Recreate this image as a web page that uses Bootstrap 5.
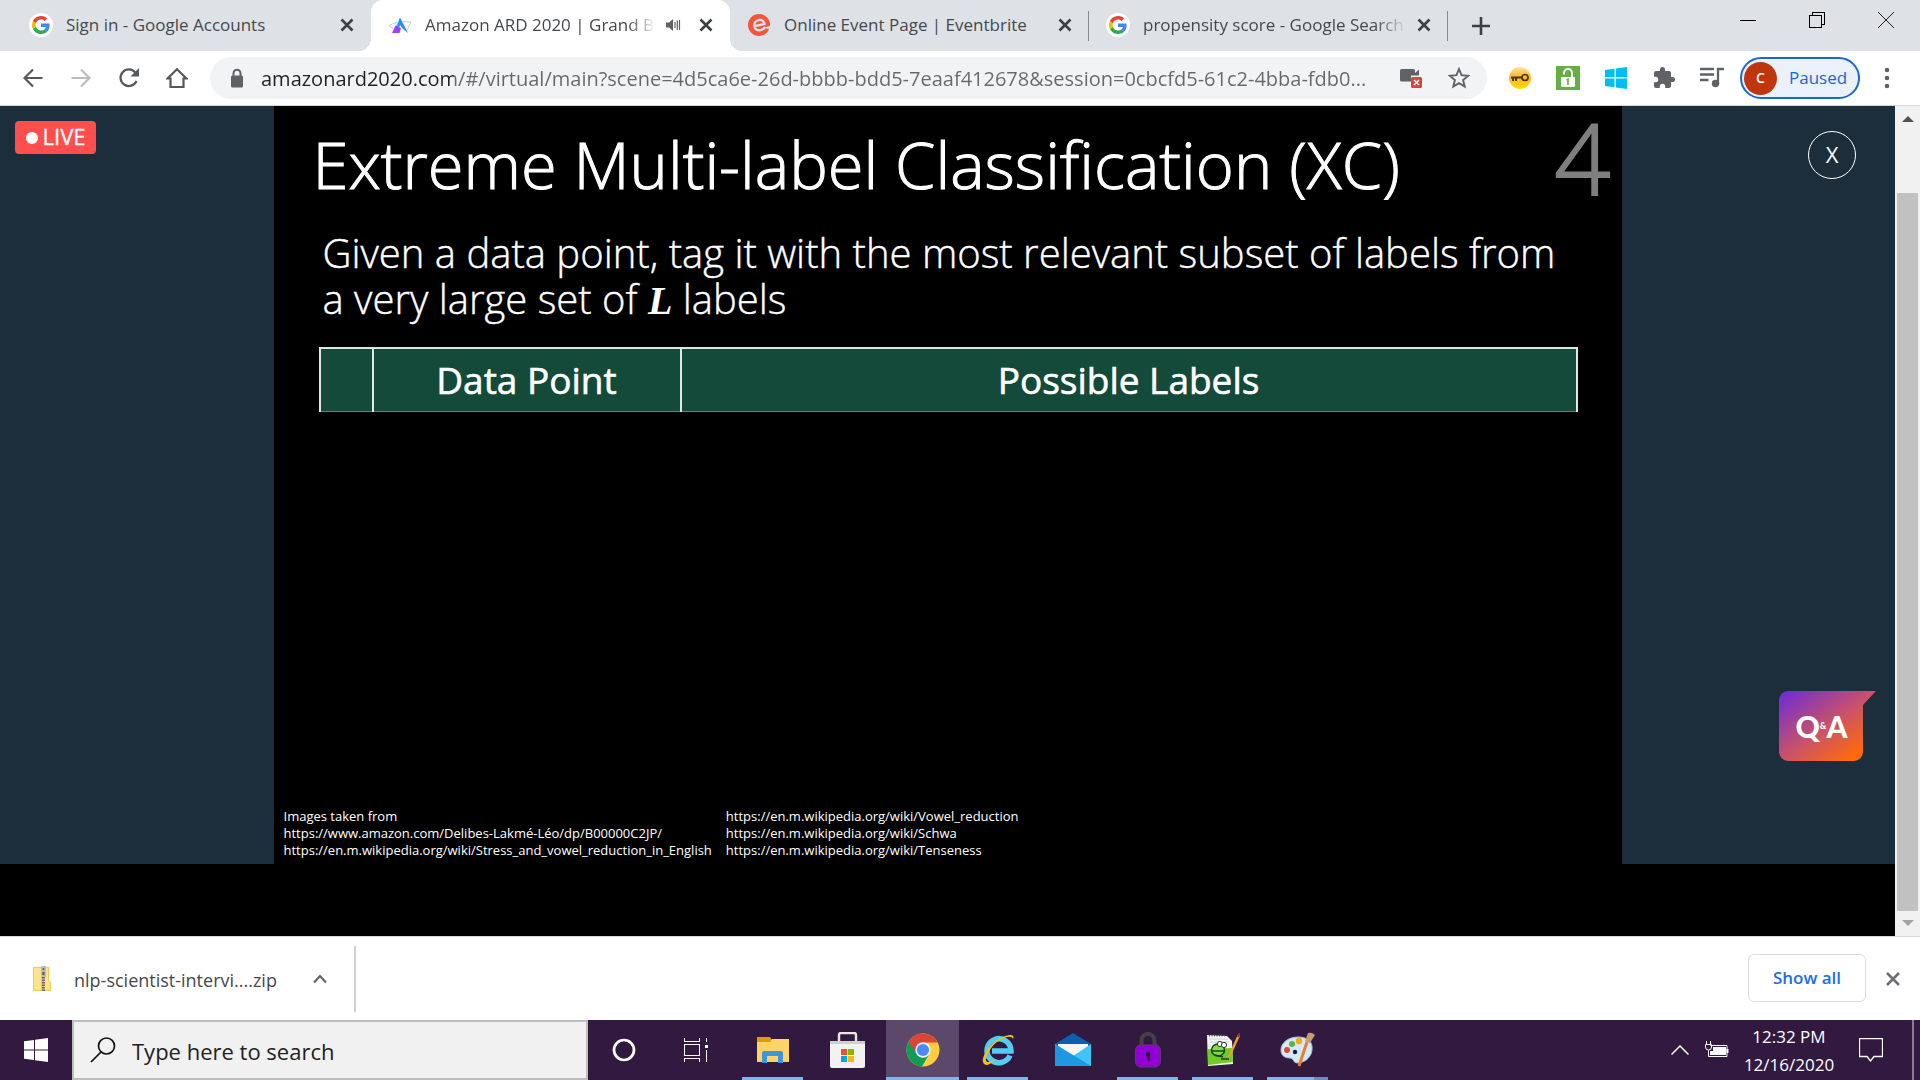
<!DOCTYPE html>
<html lang="en">
<head>
<meta charset="utf-8">
<meta name="viewport" content="width=device-width, initial-scale=1">
<title>Amazon ARD 2020 | Grand Ballroom</title>
<link href="https://cdn.jsdelivr.net/npm/bootstrap@5.3.0/dist/css/bootstrap.min.css" rel="stylesheet">
<style>
  body { font-family: "Open Sans", "Noto Sans", sans-serif; background: #000; overflow: hidden; }
  button { background: none; border: 0; padding: 0; color: inherit; }
  svg { display: block; flex: none; }

  /* tab strip */
  .tabstrip { height: 51px; background: #dee1e6; padding-left: 12px; color: #45494d; }
  .tab-item { flex: 0 1 359px; height: 51px; padding: 0 12px 2px 17px; gap: 13px; position: relative; min-width: 0; }
  .tab-item a { font-size: 17px; line-height: 24px; color: #45494d; text-decoration: none; white-space: nowrap; overflow: hidden; flex: 1 1 0; margin-right: -8px; }
  .tab-item a.fading { -webkit-mask-image: linear-gradient(to right, #000 88%, transparent); mask-image: linear-gradient(to right, #000 88%, transparent); }
  .tab-item.current { background: #fff; border-radius: 12px 12px 0 0; }
  .tab-item.current a { margin-right: -4px; }
  .tab-item.current::before, .tab-item.current::after { content: ""; position: absolute; bottom: 0; width: 12px; height: 12px; }
  .tab-item.current::before { left: -12px; background: radial-gradient(circle at 0 0, transparent 12px, #fff 12px); }
  .tab-item.current::after { right: -12px; background: radial-gradient(circle at 100% 0, transparent 12px, #fff 12px); }
  .tab-x { width: 24px; height: 24px; }
  .favicon { width: 24px; height: 24px; }
  .tab-rule { width: 1px; height: 30px; background: #85888c; margin-left: -1px; }
  .win-btn { width: 69px; height: 40px; }

  /* toolbar */
  .toolbar { height: 55px; background: #fff; border-bottom: 1px solid #d5d7da; padding: 0 22px 0 9px; color: #5f6368; }
  .tool-btn { width: 48px; height: 42px; flex: none; }
  .omnibox { height: 42px; border-radius: 21px; background: #f1f3f4; margin-left: 9px; margin-right: 9px; padding-left: 15px; padding-right: 4px; min-width: 0; }
  .omnibox input { border: 0; outline: 0; padding: 0; margin-left: 12px; font-size: 20px; height: 32px; min-width: 0;
    -webkit-text-fill-color: transparent; -webkit-background-clip: text; background-clip: text;
    background-image: linear-gradient(to right, #202124 193px, #65696d 193px); }
  .paused { height: 42px; width: 120px; border: 2px solid #1967d2; border-radius: 21px; background: #ebf1fb; color: #1967d2; font-size: 17px; padding-left: 2px; gap: 12px; }
  .avatar { width: 33px; height: 33px; border-radius: 50%; background: #bf360c; color: #fff; font-size: 14px; line-height: 32px; font-weight: 600; }

  /* page */
  .page-area { background: #000; min-height: 0; }
  .stage { background: #1c2e3b; align-items: stretch; }
  .slide { flex: 0 0 71.1%; aspect-ratio: 16 / 9; background: #000; color: #fff; padding: 0 44px 5px 41px; }
  .live-tag { background: #ff4e4e; border-radius: 4px; width: 81px; height: 33px; margin: 15px; padding-bottom: 2px; font-size: 22px; gap: 5px; color: #fff; -webkit-text-stroke: 0.3px #fff; }
  .live-dot { width: 12px; height: 12px; border-radius: 50%; background: #fff; margin-top: 2px; }
  .slide h1 { font-weight: 300; font-size: 65px; line-height: 90px; margin: 13px 0 0 -2px; white-space: nowrap; -webkit-text-stroke: 1px #fff; }
  .slide-no { font-weight: 300; font-size: 98px; line-height: 103px; color: #7f7f7f; margin-right: -33px; -webkit-text-stroke: 2px #7f7f7f; }
  .slide-lead { font-weight: 300; font-size: 40px; line-height: 46px; margin: 21px 0 0 8px; white-space: nowrap; -webkit-text-stroke: 0.4px #fff; }
  .math { font-family: "Liberation Serif", serif; font-weight: 700; font-style: italic; font-size: 40px; line-height: 40px; -webkit-text-stroke: 0; }
  .label-table { width: 1259px; max-width: 100%; margin: 25px 0 0 4px; border-collapse: collapse; table-layout: fixed; }
  .label-table th { height: 63px; padding: 0; background: #134a3a; border: 2px solid #dfe8e4; border-bottom: 1px solid #5d8277; font-size: 37px; line-height: 56px; font-weight: 400; text-align: center; -webkit-text-stroke: 0.6px #fff; }
  .credits { font-size: 13px; line-height: 17px; gap: 14px; margin-left: -31px; white-space: nowrap; }
  .circle-x { width: 48px; height: 48px; border: 1px solid #fff; border-radius: 50%; color: #fff; font-size: 22px; line-height: 42px; margin: 25px 39px 0 0; padding-bottom: 2px; }
  .qa { width: 97px; height: 70px; position: relative; margin: 0 19px 103px 0; }
  .qa svg { position: absolute; left: 0; top: 0; }
  .qa span { position: relative; color: #fff; font-family: Lato, sans-serif; font-weight: 900; font-size: 30px; line-height: 68px; }
  .qa span.amp { font-size: 9px; }
  .scroller { width: 25px; background: #f1f1f1; padding: 0 2px; }
  .scroller .thumb { background: #c1c1c1; margin-top: 62px; flex: 1 1 0; align-self: stretch; }

  /* download shelf */
  .shelf { height: 84px; background: #fff; border-top: 1px solid #d5d7da; color: #45494d; }
  .shelf-file { width: 356px; height: 66px; border-right: 2px solid #d0d0d0; padding-left: 33px; font-size: 18px; }
  .file-name { margin-left: 23px; padding-top: 3px; }
  .show-all { width: 118px; height: 48px; border: 1px solid #dadce0; border-radius: 6px; color: #1a6ee8; font-size: 17px; font-weight: 600; margin-bottom: 2px; }

  /* taskbar */
  .taskbar { height: 60px; background: #321940; color: #fff; }
  .start-btn { width: 72px; }
  .task-search { width: 516px; background: #f1f1f1; border: 2px solid #bebebe; padding-left: 16px; color: #111; }
  .task-search input { border: 0; outline: 0; background: none; font-size: 22px; padding: 3px 0 0; margin-left: 16px; color: #222; min-width: 0; }
  .task-search input::placeholder { color: #222; opacity: 1; }
  .sys-btn { width: 72px; }
  .app-btn { width: 73px; border: 6px solid transparent; border-width: 0 6px; position: relative; }
  .app-btn.running::after { content: ""; position: absolute; left: 0; right: 0; bottom: 0; height: 3px; background: #76b9ed; }
  .app-btn.focused { background: #5b486a; border-color: #5b486a; }
  .app-btn.focused::after { left: -6px; right: -6px; }
  .app-btn.stacked::after { background: linear-gradient(to right, #76b9ed 47px, #5f92bd 47px); }
  .tray { gap: 12px; margin-right: 6px; }
  .clock { font-size: 17px; line-height: 28px; width: 96px; padding-top: 2px; }
  .desk-edge { width: 2px; background: #8b7a96; margin: 0 6px 0 13px; }
</style>
</head>
<body class="vh-100 d-flex flex-column">

<svg width="0" height="0" class="position-absolute" aria-hidden="true">
  <symbol id="g-logo" viewBox="0 0 24 24">
    <circle cx="12" cy="12" r="12" fill="#fff"/>
    <path d="M20.6 12.2c0-.6-.1-1.200-.2-1.700H12v3.500h4.900c-.2 1.100-.9 2-1.800 2.700l2.900 2.200c1.700-1.600 2.600-3.900 2.600-6.700z" fill="#4285f4"/>
    <path d="M12 21c2.400 0 4.500-.8 6-2.200l-2.900-2.200c-.8.5-1.800.9-3.100.9-2.400 0-4.400-1.600-5.100-3.700L3.900 16C5.400 19 8.500 21 12 21z" fill="#34a853"/>
    <path d="M6.900 13.700a5.400 5.400 0 0 1 0-3.400L3.900 8a9 9 0 0 0 0 8z" fill="#fbbc05"/>
    <path d="M12 6.600c1.300 0 2.500.5 3.500 1.400L18.100 5.400A9 9 0 0 0 3.900 8l3 2.300C7.600 8.100 9.600 6.600 12 6.600z" fill="#ea4335"/>
  </symbol>
  <symbol id="x-mark" viewBox="0 0 24 24"><path d="M6.500 6.500l11 11M17.500 6.500l-11 11" stroke="#3c4043" stroke-width="2.600" fill="none"/></symbol>
</svg>

<header>
  <nav class="tabstrip d-flex align-items-center" aria-label="Tabs">
    <div class="tab-item d-flex align-items-center">
      <svg class="favicon"><use href="#g-logo"/></svg>
      <a href="#">Sign in - Google Accounts</a>
      <button class="tab-x" aria-label="Close tab"><svg width="24" height="24"><use href="#x-mark"/></svg></button>
    </div>
    <div class="tab-item current d-flex align-items-center">
      <svg class="favicon" viewBox="0 0 24 24">
        <path d="M1 12.500L9 9M15 8.500l8 .5-4 8M1 12.500l4 3" stroke="#c9c9d4" fill="none" stroke-width="1"/>
        <path d="M12 4.500L5 20l5-4 2-3z" fill="#35c8f2"/><path d="M12 4.500L20 20l-5-4-3-4-3 3z" fill="#1f8df5"/><path d="M4 20l3.500-7.500L13 15l-1.500 5z" fill="#a33ff5"/>
      </svg>
      <a href="#" class="fading">Amazon ARD 2020 | Grand Ballroom</a>
      <svg width="16" height="16" viewBox="0 0 16 16" fill="#5f6368"><path d="M1 5.500h3L8 2v12l-4-3.500H1z"/><path d="M10 5v6M12.300 3.500v9.500M14.500 3v10" stroke="#5f6368" stroke-width="1.200"/></svg>
      <button class="tab-x" aria-label="Close tab"><svg width="24" height="24"><use href="#x-mark"/></svg></button>
    </div>
    <div class="tab-item d-flex align-items-center">
      <svg class="favicon" viewBox="0 0 24 24"><circle cx="12" cy="12" r="11" fill="#f6553a"/><path d="M7 13.400l10.500-2.500C17 8 14.800 6.500 12 7c-3.200.6-5.200 3.200-4.700 6.400.5 2.800 3 4.400 6 3.700 1.900-.4 3.600-1.400 5-3" fill="none" stroke="#dee1e6" stroke-width="2.400"/><path d="M17.500 14.500l6.500-2v5z" fill="#dee1e6"/></svg>
      <a href="#">Online Event Page | Eventbrite</a>
      <button class="tab-x" aria-label="Close tab"><svg width="24" height="24"><use href="#x-mark"/></svg></button>
    </div>
    <span class="tab-rule"></span>
    <div class="tab-item d-flex align-items-center">
      <svg class="favicon"><use href="#g-logo"/></svg>
      <a href="#" class="fading">propensity score - Google Search</a>
      <button class="tab-x" aria-label="Close tab"><svg width="24" height="24"><use href="#x-mark"/></svg></button>
    </div>
    <span class="tab-rule"></span>
    <button class="d-flex align-items-center justify-content-center ms-3 px-2" aria-label="New tab"><svg width="18" height="18" viewBox="0 0 18 18"><path d="M9 0v18M0 9h18" stroke="#3c4043" stroke-width="2.600"/></svg></button>
    <div class="d-flex ms-auto align-self-start">
      <button class="win-btn d-flex align-items-center justify-content-center" aria-label="Minimize"><svg width="16" height="16" shape-rendering="crispEdges"><path d="M0 8.500h16" stroke="#000"/></svg></button>
      <button class="win-btn d-flex align-items-center justify-content-center" aria-label="Restore"><svg width="16" height="16" fill="none" stroke="#000" shape-rendering="crispEdges"><path d="M.5 3.500h11.500v12H.5zM3.500 3.500v-3h12v12h-3.500"/></svg></button>
      <button class="win-btn d-flex align-items-center justify-content-center" aria-label="Close"><svg width="16" height="16" stroke="#222"><path d="M0 0l16 16M16 0L0 16"/></svg></button>
    </div>
  </nav>

  <div class="toolbar d-flex align-items-center">
    <button class="tool-btn d-flex align-items-center justify-content-center" aria-label="Back"><svg width="20" height="20" viewBox="0 0 20 20" fill="none" stroke="#55595e" stroke-width="2.200"><path d="M19.500 10H1.500M10 1.500L1.500 10l8.500 8.500"/></svg></button>
    <button class="tool-btn d-flex align-items-center justify-content-center" aria-label="Forward"><svg width="20" height="20" viewBox="0 0 20 20" fill="none" stroke="#babcbe" stroke-width="2.200"><path d="M.5 10h18M10 1.500l8.500 8.500-8.500 8.500"/></svg></button>
    <button class="tool-btn d-flex align-items-center justify-content-center" aria-label="Reload"><svg width="22" height="22" viewBox="0 0 22 22"><path d="M18.500 14A8.300 8.300 0 1 1 17.300 5.500" fill="none" stroke="#55595e" stroke-width="2.300"/><path d="M21 1v8.500h-8.500z" fill="#55595e"/></svg></button>
    <button class="tool-btn d-flex align-items-center justify-content-center" aria-label="Home"><svg width="22" height="22" viewBox="0 0 22 22"><path d="M1.500 11.500L11 2.200l9.500 9.300h-3V20h-13v-8.500z" fill="none" stroke="#55595e" stroke-width="2.200"/></svg></button>
    <div class="omnibox d-flex align-items-center flex-grow-1">
      <svg width="24" height="24" viewBox="0 0 24 24"><rect x="6" y="9.500" width="12" height="12" rx="1.500" fill="#5f6368"/><path d="M8.500 10V7.200a3.500 3.500 0 0 1 7 0V10" fill="none" stroke="#5f6368" stroke-width="2"/></svg>
      <input class="flex-grow-1" type="text" aria-label="Address" value="amazonard2020.com/#/virtual/main?scene=4d5ca6e-26d-bbbb-bdd5-7eaaf412678&amp;session=0cbcfd5-61c2-4bba-fdb0...">
      <button class="tool-btn d-flex align-items-center justify-content-center" aria-label="Camera blocked"><svg width="22" height="20" viewBox="0 0 22 20"><path d="M0 2.500A1.500 1.500 0 0 1 1.500 1h12A1.500 1.500 0 0 1 15 2.500V5l4-3.500v6H11v6H1.500A1.500 1.500 0 0 1 0 12z" fill="#5f6368"/><rect x="11" y="9" width="11" height="11" rx="1.500" fill="#e0413a"/><path d="M14 12l5 5M19 12l-5 5" stroke="#fff" stroke-width="1.500"/></svg></button>
      <button class="tool-btn d-flex align-items-center justify-content-center" aria-label="Bookmark"><svg width="22" height="22" viewBox="0 0 22 22"><path d="M11 2l2.500 6.200 6.700.6-5.100 4.300 1.600 6.500L11 16.100l-5.700 3.500 1.600-6.500L1.800 8.800l6.700-.6z" fill="none" stroke="#5f6368" stroke-width="1.900"/></svg></button>
    </div>
    <button class="tool-btn d-flex align-items-center justify-content-center" aria-label="Key extension"><svg width="24" height="24" viewBox="0 0 24 24"><defs><linearGradient id="ky" x1="0" y1="0" x2="0" y2="1"><stop offset="0" stop-color="#ffdf9a"/><stop offset=".5" stop-color="#ffb61e"/><stop offset="1" stop-color="#ffe000"/></linearGradient></defs><circle cx="12" cy="12" r="11" fill="url(#ky)"/><circle cx="17" cy="11.500" r="3" fill="none" stroke="#463516" stroke-width="1.700"/><path d="M14 11.500H3M5 12v3M8 12v3" stroke="#463516" stroke-width="2"/></svg></button>
    <button class="tool-btn d-flex align-items-center justify-content-center" aria-label="Padlock extension"><svg width="24" height="24" viewBox="0 0 24 24"><path d="M0 0h24v24H0z" fill="#65ae43"/><rect x="5" y="11" width="14" height="10" rx="1" fill="#fff"/><path d="M8 8.500V7a4 4 0 0 1 8 0v5" fill="none" stroke="#fff" stroke-width="2"/><path d="M10.500 14.200l1.500-1V19" fill="none" stroke="#65ae43" stroke-width="1.600"/></svg></button>
    <button class="tool-btn d-flex align-items-center justify-content-center" aria-label="Windows extension"><svg width="22" height="22" viewBox="0 0 22 22" fill="#00bdf2"><path d="M0 3l9.500-1.300V10.300H0zM10.800 1.500L22 0v10.300H10.800zM0 11.600h9.500v8.700L0 19zM10.800 11.600H22V22l-11.200-1.500z"/></svg></button>
    <button class="tool-btn d-flex align-items-center justify-content-center" aria-label="Extensions"><svg width="24" height="24" viewBox="0 0 24 24" fill="#5f6368"><path d="M20.500 11H19V7a2 2 0 0 0-2-2h-4V3.500a2.500 2.500 0 0 0-5 0V5H4a2 2 0 0 0-2 2v3.800h1.500a2.700 2.700 0 0 1 0 5.400H2V20c0 1.100.9 2 2 2h3.800v-1.500a2.700 2.700 0 0 1 5.400 0V22H17a2 2 0 0 0 2-2v-4h1.500a2.500 2.500 0 0 0 0-5z"/></svg></button>
    <button class="tool-btn d-flex align-items-center justify-content-center" aria-label="Media"><svg width="24" height="22" viewBox="0 0 24 22"><path d="M0 2h14M0 7.500h14M0 13h8.500" stroke="#5f6368" stroke-width="2.300"/><circle cx="15.500" cy="16.500" r="3.700" fill="#5f6368"/><path d="M18 16.500V2h6" fill="none" stroke="#5f6368" stroke-width="2.300"/></svg></button>
    <button class="paused d-flex align-items-center ms-1"><span class="avatar">C</span>Paused</button>
    <button class="d-flex align-items-center justify-content-center ms-3 px-2" aria-label="Menu"><svg width="6" height="22" viewBox="0 0 6 22" fill="#5f6368"><circle cx="3" cy="3" r="2.300"/><circle cx="3" cy="11" r="2.300"/><circle cx="3" cy="19" r="2.300"/></svg></button>
  </div>
</header>

<div class="page-area d-flex flex-grow-1">
  <main class="flex-grow-1">
    <section class="stage d-flex">
      <div class="d-flex align-items-start" style="flex:1 1 0">
        <div class="live-tag d-flex align-items-center justify-content-center"><span class="live-dot"></span>LIVE</div>
      </div>
      <article class="slide d-flex flex-column">
        <div class="d-flex justify-content-between align-items-start">
          <h1>Extreme Multi-label Classification (XC)</h1>
          <span class="slide-no">4</span>
        </div>
        <p class="slide-lead">Given a data point, tag it with the most relevant subset of labels from<br>a very large set of <span class="math">L</span> labels</p>
        <table class="label-table">
          <colgroup><col width="53"><col width="308"><col></colgroup>
          <thead><tr><th scope="col" aria-label="Image"></th><th scope="col">Data Point</th><th scope="col">Possible Labels</th></tr></thead>
        </table>
        <div class="credits d-flex align-items-end mt-auto">
          <div>Images taken from<br>https://www.amazon.com/Delibes-Lakmé-Léo/dp/B00000C2JP/<br>https://en.m.wikipedia.org/wiki/Stress_and_vowel_reduction_in_English</div>
          <div>https://en.m.wikipedia.org/wiki/Vowel_reduction<br>https://en.m.wikipedia.org/wiki/Schwa<br>https://en.m.wikipedia.org/wiki/Tenseness</div>
        </div>
      </article>
      <div class="d-flex flex-column align-items-end justify-content-between" style="flex:1 1 0">
        <button class="circle-x" aria-label="Close video">X</button>
        <button class="qa" aria-label="Questions and answers">
          <svg width="97" height="70" viewBox="0 0 97 70"><defs><linearGradient id="qg" x1="0" y1="0" x2="1" y2="1"><stop offset="0" stop-color="#6a2bd9"/><stop offset=".5" stop-color="#c9526a"/><stop offset=".85" stop-color="#ff6a0a"/></linearGradient></defs><path d="M9 0h88L84 14v47a9 9 0 0 1-9 9H9a9 9 0 0 1-9-9V9a9 9 0 0 1 9-9z" fill="url(#qg)"/></svg>
          <span class="d-flex align-items-center justify-content-center me-3 ps-1"><span>Q</span><span class="amp">&amp;</span><span>A</span></span>
        </button>
      </div>
    </section>
  </main>
  <div class="scroller d-flex flex-column align-items-center">
    <svg width="12" height="25" viewBox="0 0 12 25"><path d="M0 16l6-6 6 6z" fill="#505050"/></svg>
    <div class="thumb"></div>
    <svg width="12" height="25" viewBox="0 0 12 25"><path d="M0 9h12l-6 6z" fill="#a3a3a3"/></svg>
  </div>
</div>

<section class="shelf d-flex align-items-center" aria-label="Downloads">
  <div class="shelf-file d-flex align-items-center">
    <svg width="18" height="26" viewBox="0 0 18 26"><path d="M0 1h16v14l2 1v9H0z" fill="#f2cb52"/><path d="M1 2h7v22H1zM11 2h4v13l2 2v7h-6z" fill="#ffe48f"/><path d="M8 0h5v11H8z" fill="#b9bcc0"/><circle cx="10.500" cy="3" r="1" fill="#555"/><path d="M9.500 6h2v3h-2z" fill="#555"/><path d="M10.500 11v14" stroke="#666" stroke-width="3" stroke-dasharray="1.500 1"/></svg>
    <a href="#" class="file-name text-reset text-decoration-none">nlp-scientist-intervi....zip</a>
    <button class="ms-4 ps-2 pe-1" aria-label="File options"><svg class="ms-1" width="14" height="10" viewBox="0 0 14 10"><path d="M1 8.500L7 2l6 6.500" fill="none" stroke="#5f6368" stroke-width="2.200"/></svg></button>
  </div>
  <button class="show-all ms-auto">Show all</button>
  <button class="mx-3 px-1" aria-label="Close downloads"><svg width="14" height="14" viewBox="0 0 14 14"><path d="M1 1l12 12M13 1L1 13" stroke="#6b6f73" stroke-width="2.600"/></svg></button>
</section>

<footer class="taskbar d-flex align-items-stretch">
  <button class="start-btn d-flex align-items-center justify-content-center" aria-label="Start"><svg width="24" height="24" viewBox="0 0 24 24" fill="#fff"><path d="M0 3.300L10 2v9.500H0zM11 1.800L24 0v11.500H11zM0 12.500h10V22L0 20.700zM11 12.500h13V24l-13-1.800z"/></svg></button>
  <label class="task-search d-flex align-items-center">
    <svg width="26" height="26" viewBox="0 0 26 26" fill="none" stroke="#111" stroke-width="1.700"><circle cx="16.500" cy="9" r="8"/><path d="M11 15L1 25"/></svg>
    <input class="flex-grow-1" type="search" placeholder="Type here to search" aria-label="Type here to search">
  </label>
  <button class="sys-btn d-flex align-items-center justify-content-center" aria-label="Cortana"><svg width="24" height="24"><circle cx="12" cy="12" r="10" fill="none" stroke="#fff" stroke-width="2.700"/></svg></button>
  <button class="sys-btn d-flex align-items-center justify-content-center me-1" aria-label="Task view"><svg width="24" height="24" fill="none" stroke="#fff" shape-rendering="crispEdges"><path d="M.5 0v3.500h15V0M.5 24v-3.500h15V24M.5 6.500h15v11H.5zM22.500 0v4M22.500 12v12"/><path d="M21 7h3v3h-3z" fill="#fff" stroke="none"/></svg></button>
  <div class="d-flex" style="gap:2px">
    <button class="app-btn running d-flex align-items-center justify-content-center" aria-label="File Explorer"><svg width="32" height="28" viewBox="0 0 32 28"><path d="M0 1h13l2 3v4H0z" fill="#e09b0c"/><path d="M0 6h13l2-3h17v23H0z" fill="#ffd365"/><path d="M5 27V17q0-2 2-2h17q2 0 2 2v10h-5v-7H10v7z" fill="#3a96dd"/></svg></button>
    <button class="app-btn d-flex align-items-center justify-content-center" aria-label="Microsoft Store"><svg width="35" height="36" viewBox="0 0 35 36"><path d="M9 11V3q0-2 2-2h13q2 0 2 2v8" fill="none" stroke="#e8e8e8" stroke-width="2.400"/><path d="M0 9h35v25q0 2-2 2H2q-2 0-2-2z" fill="#f2f2f2"/><path d="M0 9h35v3H0z" fill="#cfcfcf"/><path d="M11 17h6v6h-6z" fill="#f25022"/><path d="M18 17h6v6h-6z" fill="#7fba00"/><path d="M11 24h6v6h-6z" fill="#00a4ef"/><path d="M18 24h6v6h-6z" fill="#ffb900"/></svg></button>
    <button class="app-btn running focused d-flex align-items-center justify-content-center" aria-label="Chrome"><svg width="34" height="34" viewBox="0 0 34 34"><circle cx="17" cy="17" r="16.500" fill="#ffcd40"/><path d="M17 17L2.700 8.700A16.500 16.500 0 0 0 16 33.500l7-12z" fill="#0f9d58"/><path d="M2.700 8.700A16.500 16.500 0 0 1 31.600 9.500H17v7l-7 4z" fill="#db4437"/><circle cx="17" cy="17" r="7.700" fill="#f1f1f1"/><circle cx="17" cy="17" r="6.100" fill="#4b8bf5"/></svg></button>
    <button class="app-btn running d-flex align-items-center justify-content-center" aria-label="Internet Explorer"><svg width="34" height="34" viewBox="0 0 34 34"><path d="M29 22.500A12 12 0 1 1 30 18H11" fill="none" stroke="#55ccf5" stroke-width="5.500"/><path d="M5 32c-8-2 0-17 10-24S35 0 32 6c-1-4-9-2-16 3S0 30 8 29q4-1 7-3-6 6-10 6z" fill="#f5bf18"/></svg></button>
    <button class="app-btn d-flex align-items-center justify-content-center" aria-label="Mail"><svg width="36" height="34" viewBox="0 0 36 34"><path d="M0 11L18 0l18 11v12H0z" fill="#0a5fb0"/><path d="M3 11h30v12H3z" fill="#f5f5f5"/><path d="M0 11l18 12L36 11v22H0z" fill="#3fc4f3"/><path d="M0 11l36 22H0z" fill="#1f98e3"/></svg></button>
    <button class="app-btn running d-flex align-items-center justify-content-center" aria-label="Padlock"><svg width="26" height="36" viewBox="0 0 26 36"><path d="M6.500 15V8.500a6.500 6.500 0 0 1 13 0V15" fill="none" stroke="#454049" stroke-width="4"/><rect x=".5" y="13" width="25" height="22" rx="5" fill="#9200d6" stroke="#5c3a6c"/><circle cx="13" cy="22.500" r="2.300" fill="#26052f"/><path d="M12 23h2v6z" fill="#26052f" stroke="#26052f"/></svg></button>
    <button class="app-btn running d-flex align-items-center justify-content-center" aria-label="Notepad++"><svg width="34" height="34" viewBox="0 0 34 34"><path d="M1 2l20 1 5 5 1 23-25 2z" fill="#f4f7f2"/><path d="M2 16l24-1 1 14-25 3z" fill="#6fcb24"/><path d="M3 2.500h17" stroke="#555" stroke-width="2" stroke-dasharray="1 1.500"/><path d="M3 6h19M3 9h20" stroke="#c7d4e2"/><ellipse cx="12" cy="17" rx="6.500" ry="6" fill="#7fdc4a" stroke="#1d3d18" stroke-width="1.500"/><circle cx="14" cy="11" r="2.600" fill="#fff" stroke="#333"/><circle cx="18" cy="12" r="2.600" fill="#fff" stroke="#333"/><path d="M5 18h14M9 22l8 2M15 26h8" stroke="#24401f" stroke-width="1.500"/><path d="M23 24L33 2" stroke="#e5a429" stroke-width="2.500"/><path d="M32 4l1.500-4" stroke="#a52a2a" stroke-width="2"/></svg></button>
    <button class="app-btn running stacked d-flex align-items-center justify-content-center" aria-label="Paint"><svg width="36" height="36" viewBox="0 0 36 36"><path d="M18 5c10 0 15 5 14 13-1 9-9 13-15 13-4 0-3-5-7-5-5 0-9-2-9-8C1 11 8 5 18 5z" fill="#d3e9f6" stroke="#9bbdd2"/><circle cx="15" cy="20" r="2.200" fill="#20183f"/><circle cx="7" cy="18" r="3" fill="#e1453b"/><circle cx="12" cy="12" r="3" fill="#5cb548"/><circle cx="19" cy="9" r="3.200" fill="#f7a81b"/><path d="M19 34l8-24" stroke="#e2812e" stroke-width="3"/><path d="M25 9l3-8q4-1 7 2l-5 8z" fill="#c79b6d"/></svg></button>
  </div>
  <div class="tray d-flex ms-auto align-items-center">
    <svg class="me-1" width="18" height="10" viewBox="0 0 18 10"><path d="M.5 9.500L9 1l8.500 8.500" fill="none" stroke="#fff" stroke-width="1.500"/></svg>
    <svg width="24" height="18" viewBox="0 0 24 18"><path d="M5.500 4.500h16.500v11H3.500v-6" fill="none" stroke="#fff"/><path d="M8 6h13v8H5V10h3z" fill="#fff"/><path d="M22.500 8v4" stroke="#fff" stroke-width="2"/><path d="M1.500 0v4M5.500 0v4M.5 3.500h6V6q0 3-3 3t-3-3z" fill="none" stroke="#fff"/></svg>
    <time class="clock text-center" datetime="2020-12-16T12:32">12:32 PM<br>12/16/2020</time>
  </div>
  <button class="px-3 d-flex align-items-center" aria-label="Notifications"><svg width="24" height="24" viewBox="0 0 24 24"><path d="M.5.500h23v18h-8.500L11.500 23 8 18.500H.5z" fill="none" stroke="#fff" stroke-width="1.300"/></svg></button>
  <span class="desk-edge"></span>
</footer>

<script src="https://cdn.jsdelivr.net/npm/bootstrap@5.3.0/dist/js/bootstrap.bundle.min.js"></script>
</body>
</html>
